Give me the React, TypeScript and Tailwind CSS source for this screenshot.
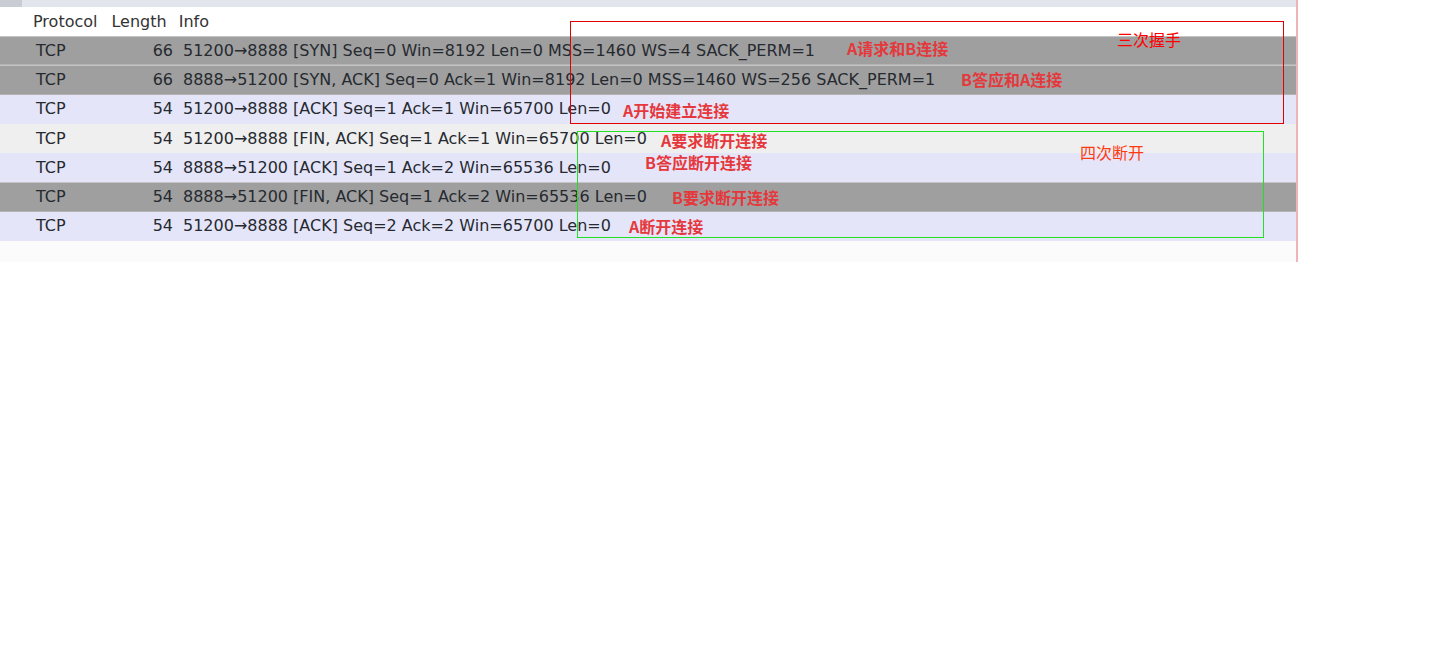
const rows = [
  { len: "66", info: "51200→8888 [SYN] Seq=0 Win=8192 Len=0 MSS=1460 WS=4 SACK_PERM=1", kind: "sel" },
  { len: "66", info: "8888→51200 [SYN, ACK] Seq=0 Ack=1 Win=8192 Len=0 MSS=1460 WS=256 SACK_PERM=1", kind: "sel" },
  { len: "54", info: "51200→8888 [ACK] Seq=1 Ack=1 Win=65700 Len=0", kind: "lav" },
  { len: "54", info: "51200→8888 [FIN, ACK] Seq=1 Ack=1 Win=65700 Len=0", kind: "grey" },
  { len: "54", info: "8888→51200 [ACK] Seq=1 Ack=2 Win=65536 Len=0", kind: "lav" },
  { len: "54", info: "8888→51200 [FIN, ACK] Seq=1 Ack=2 Win=65536 Len=0", kind: "sel" },
  { len: "54", info: "51200→8888 [ACK] Seq=2 Ack=2 Win=65700 Len=0", kind: "lav" },
];

// red notes drawn on top of the capture
const notes = [
  { text: "A请求和B连接", x: "left-[847px]", y: "top-[38px]" },
  { text: "B答应和A连接", x: "left-[961px]", y: "top-[69px]" },
  { text: "A开始建立连接", x: "left-[623px]", y: "top-[100px]" },
  { text: "A要求断开连接", x: "left-[661px]", y: "top-[130px]" },
  { text: "B答应断开连接", x: "left-[645px]", y: "top-[152px]" },
  { text: "B要求断开连接", x: "left-[672px]", y: "top-[187px]" },
  { text: "A断开连接", x: "left-[629px]", y: "top-[216px]" },
];

function rowClass(kind: string) {
  if (kind === "sel") return "bg-[#9f9f9f] border-t border-b border-t-[#c4c4c4] border-b-[#b4b4b4]";
  if (kind === "grey") return "bg-[#efefef]";
  return "bg-[#e5e5f9]";
}

export default function App() {
  return (
    <div className="min-h-screen bg-white font-['DejaVu_Sans',sans-serif]">
      <div className="relative w-[1298px] h-[262px] border-r-2 border-r-[#eeb4b8] bg-[#fbfbfb] overflow-hidden">
        {/* top strip */}
        <div className="h-[7px] flex bg-[#e2e5ec]">
          <div className="w-[22px] bg-[#c9ccd3]" />
        </div>

        {/* column header */}
        <div className="h-[29px] flex items-center bg-white text-[16px] text-[#333] leading-none">
          <span className="ml-[33px]">Protocol</span>
          <span className="ml-[14px]">Length</span>
          <span className="ml-[12px]">Info</span>
        </div>

        {rows.map((r, i) => (
          <div
            key={i}
            className={`h-[29.3px] flex items-center text-[16px] text-[#262a30] leading-none whitespace-nowrap ${rowClass(r.kind)}`}
          >
            <span className="ml-[36px] w-[100px]">TCP</span>
            <span className="w-[37px] text-right">{r.len}</span>
            <span className="ml-[10px]">{r.info}</span>
          </div>
        ))}

        {notes.map((n) => (
          <div
            key={n.text + n.y}
            className={`absolute ${n.x} ${n.y} text-[16px] font-bold leading-[20px] text-[#e5383c] whitespace-nowrap font-['Noto_Sans_CJK_SC',sans-serif]`}
          >
            {n.text}
          </div>
        ))}

        {/* handshake box */}
        <div className="absolute left-[570px] top-[21px] w-[714px] h-[103px] border border-[#e00000]" />
        <div className="absolute left-[1117px] top-[29px] text-[16px] leading-[20px] text-[#ff0000] font-['Noto_Sans_CJK_SC',sans-serif]">
          三次握手
        </div>

        {/* teardown box */}
        <div className="absolute left-[577px] top-[131px] w-[687px] h-[107px] border border-[#22e022]" />
        <div className="absolute left-[1080px] top-[142px] text-[16px] leading-[20px] text-[#ff3a10] font-['Noto_Sans_CJK_SC',sans-serif]">
          四次断开
        </div>
      </div>
    </div>
  );
}
